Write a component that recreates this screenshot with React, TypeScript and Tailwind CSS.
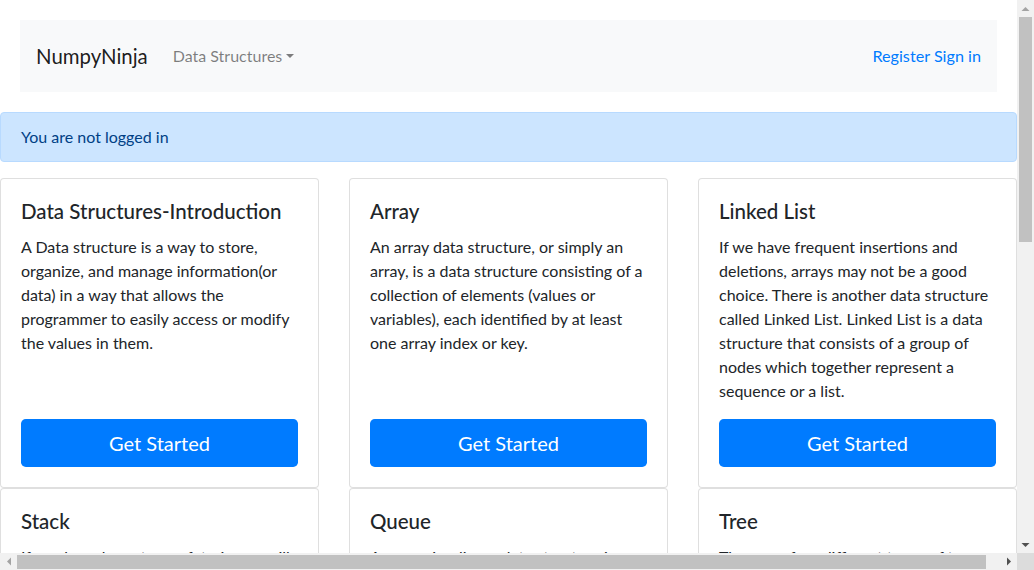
const cards = [
  {
    title: 'Data Structures-Introduction',
    text: 'A Data structure is a way to store, organize, and manage information(or data) in a way that allows the programmer to easily access or modify the values in them.',
  },
  {
    title: 'Array',
    text: 'An array data structure, or simply an array, is a data structure consisting of a collection of elements (values or variables), each identified by at least one array index or key.',
  },
  {
    title: 'Linked List',
    text: 'If we have frequent insertions and deletions, arrays may not be a good choice. There is another data structure called Linked List. Linked List is a data structure that consists of a group of nodes which together represent a sequence or a list.',
  },
];

const cards2 = [
  {
    title: 'Stack',
    text: 'If you have been to a cafeteria you will know how a stack of plates is kept and used by the customers.',
  },
  {
    title: 'Queue',
    text: 'A queue is a linear data structure in which elements are added at one end and removed from the other end.',
  },
  {
    title: 'Tree',
    text: 'There are four different types of tree traversal techniques used to visit every node of a tree.',
  },
];

function Card({ title, text }: { title: string; text: string }) {
  return (
    <div className="flex w-[319px] flex-col rounded border border-[rgba(0,0,0,0.125)] bg-white p-5">
      <h5 className="mb-3 text-[20.5px] font-medium leading-[24px] text-[#212529]">{title}</h5>
      <p className="mb-4 text-[16px] leading-[24px] text-[#212529]">{text}</p>
      <button className="mt-auto h-[48px] w-full rounded-[4.8px] bg-[#007bff] text-[20px] leading-[30px] text-white">
        Get Started
      </button>
    </div>
  );
}

function Tri({ dir, color }: { dir: 'up' | 'down' | 'left' | 'right'; color: string }) {
  const pts = {
    up: '0.5,7 4.5,3 8.5,7',
    down: '0.5,3 4.5,7 8.5,3',
    left: '7,0.5 3,4.5 7,8.5',
    right: '3,0.5 7,4.5 3,8.5',
  }[dir];
  return (
    <svg width="9" height="9" viewBox="0 0 9 9">
      <polygon points={pts} fill={color} />
    </svg>
  );
}

export default function App() {
  return (
    <div
      className="flex h-[570px] w-[1034px] flex-col overflow-hidden bg-white"
      style={{ fontFamily: 'Lato, "Noto Sans", sans-serif' }}
    >
      <div className="flex h-[553px]">
        <div className="h-[553px] w-[1017px] overflow-hidden">
          <div className="px-[20px] pt-[20px]">
            <nav className="flex h-[72px] items-center justify-between bg-[#f8f9fa] px-4">
              <div className="flex items-center">
                <span className="mr-4 text-[20.4px] leading-[30px] text-[rgba(0,0,0,0.9)]">NumpyNinja</span>
                <span className="ml-[1px] flex items-center px-2 text-[16px] leading-[24px] text-[rgba(0,0,0,0.5)]">
                  Data Structures
                  <span className="ml-[4px] inline-block h-0 w-0 border-x-[4px] border-t-[4px] border-x-transparent border-t-[rgba(0,0,0,0.5)]" />
                </span>
              </div>
              <div className="text-[16.2px] leading-[24px] text-[#007bff]">Register Sign in</div>
            </nav>
          </div>
          <div className="mt-[20px] rounded border border-[#b8daff] bg-[#cce5ff] px-5 py-3 text-[16px] leading-[24px] text-[#004085]">
            You are not logged in
          </div>
          <div className="mt-4 flex gap-[30px]">
            {cards.map((c) => (
              <Card key={c.title} {...c} />
            ))}
          </div>
          <div className="flex gap-[30px]">
            {cards2.map((c) => (
              <Card key={c.title} {...c} />
            ))}
          </div>
        </div>
        <div className="flex h-[553px] w-[17px] flex-col bg-[#f1f1f1]">
          <div className="flex h-[17px] items-center justify-center">
            <Tri dir="up" color="#a3a3a3" />
          </div>
          <div className="ml-[2px] h-[225px] w-[13px] bg-[#c1c1c1]" />
          <div className="flex-1" />
          <div className="flex h-[17px] items-center justify-center">
            <Tri dir="down" color="#505050" />
          </div>
        </div>
      </div>
      <div className="flex h-[17px]">
        <div className="flex w-[1017px] items-center bg-[#f1f1f1]">
          <div className="flex h-[17px] w-[17px] items-center justify-center">
            <Tri dir="left" color="#a3a3a3" />
          </div>
          <div className="h-[14px] w-[969px] bg-[#c1c1c1]" />
          <div className="flex-1" />
          <div className="flex h-[17px] w-[17px] items-center justify-center">
            <Tri dir="right" color="#505050" />
          </div>
        </div>
        <div className="h-[17px] w-[17px] bg-[#dcdcdc]" />
      </div>
    </div>
  );
}
